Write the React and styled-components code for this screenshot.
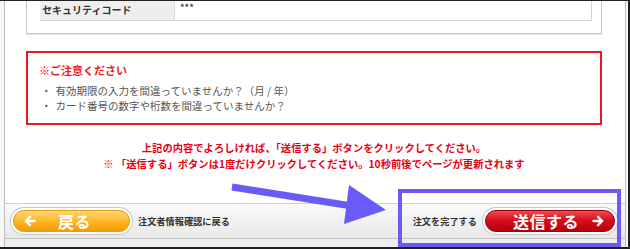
import React from 'react';
import styled, { createGlobalStyle } from 'styled-components';

const GlobalStyle = createGlobalStyle`
  html, body {
    margin: 0;
    padding: 0;
    background: #fff;
  }
  body {
    font-family: "Noto Sans CJK JP", "Noto Sans", sans-serif;
  }
`;

const Frame = styled.div`
  position: relative;
  width: 630px;
  height: 249px;
  box-sizing: border-box;
  border-top: 1px solid #222;
  border-right: 2px solid #222;
  border-bottom: 2px solid #222;
  background: #f7f7f7;
  padding-left: 4px;
  padding-right: 2px;
  overflow: hidden;
`;

const Page = styled.div`
  height: 100%;
  box-sizing: border-box;
  border-left: 1px solid #bdbdbd;
  border-right: 1px solid #bdbdbd;
  background: #fff;
  display: flex;
  flex-direction: column;
`;

const Content = styled.div`
  padding: 0 23px 0 21px;
`;

const PrevBox = styled.div`
  border: 1px solid #c8c8c8;
  border-top: none;
  box-shadow: 0 1px 0 #e4e4e4;
  padding: 0 9px 12px 13px;
`;

const InfoRow = styled.div`
  display: grid;
  grid-template-columns: 135px 1fr;
  height: 19px;
  border-right: 1px solid #d4d4d4;
  border-bottom: 1px solid #d4d4d4;
`;

const Label = styled.div`
  background: #eeeeee;
  border-right: 1px solid #dcdcdc;
  font-size: 10px;
  font-weight: 700;
  color: #333;
  padding-left: 2px;
  line-height: 17px;
`;

const Value = styled.div`
  font-size: 9px;
  font-weight: 700;
  color: #444;
  padding-left: 5px;
  line-height: 14px;
`;

const Notice = styled.div`
  margin-top: 17px;
  height: 74px;
  box-sizing: border-box;
  border: 2px solid #f0141e;
  padding: 9px 12px 0 11px;
`;

const NoticeTitle = styled.div`
  color: #ee1c25;
  font-size: 11px;
  font-weight: 700;
  line-height: 16px;
  margin-bottom: 5px;
`;

const NoticeItem = styled.div`
  color: #555;
  font-size: 10.5px;
  line-height: 15px;
  display: flex;
  gap: 4px;
  padding-left: 2px;
`;

const Messages = styled.div`
  margin-top: 15px;
  text-align: center;
  color: #e60012;
  font-size: 10.3px;
  font-weight: 700;
  line-height: 16px;
`;

const Spacer = styled.div`
  flex: 1;
`;

const Footer = styled.div`
  height: 34px;
  border-top: 1px solid #cfcfcf;
  border-bottom: 1px solid #c4c4c4;
  background: linear-gradient(#fafafa, #e9e9e9);
  display: flex;
  align-items: center;
  justify-content: space-between;
  padding: 0 10px 0 8px;
`;

const FooterBottom = styled.div`
  height: 8px;
  background: #eeeeee;
`;

const Side = styled.div`
  display: flex;
  align-items: center;
  gap: 8px;
`;

const Caption = styled.span`
  font-size: 9.2px;
  font-weight: 700;
  color: #333;
`;

const PillButton = styled.button`
  width: ${(p) => p.$width}px;
  height: 22px;
  border-radius: 11px;
  border: 1px solid ${(p) => (p.$tone === 'red' ? '#9c0010' : '#e89a10')};
  background: ${(p) =>
    p.$tone === 'red'
      ? 'linear-gradient(#ef4a4f 0%, #d8101c 45%, #b4000c 100%)'
      : 'linear-gradient(#ffd878 0%, #ffb628 50%, #f59c00 100%)'};
  box-shadow: 0 0 0 2px #fff, 0 0 0 3px #c8c8c8;
  color: #fff;
  font-family: "Noto Sans CJK JP", sans-serif;
  font-weight: 700;
  display: flex;
  align-items: center;
  padding: ${(p) => (p.$tone === 'red' ? '0 10px 0 14px' : '0 16px 0 10px')};
  cursor: pointer;
  box-sizing: border-box;
`;

const ArrowSvg = styled.svg`
  width: 12px;
  height: 12px;
  flex: none;
`;

const BtnText = styled.span`
  flex: 1;
  text-align: center;
  font-size: ${(p) => p.$size}px;
  line-height: 1;
  letter-spacing: 0.5px;
`;

const Overlay = styled.svg`
  position: absolute;
  left: 0;
  top: 0;
  pointer-events: none;
`;

const PURPLE = '#6a5af6';

const Arrow = ({ dir }) => (
  <ArrowSvg viewBox="0 0 12 12">
    <path
      d={dir === 'left' ? 'M10.5 6H2 M6 1.8L1.8 6L6 10.2' : 'M1.5 6H10 M6 1.8L10.2 6L6 10.2'}
      fill="none"
      stroke="#fff"
      strokeWidth="2.4"
      strokeLinecap="round"
      strokeLinejoin="round"
    />
  </ArrowSvg>
);

export default function App() {
  return (
    <>
      <GlobalStyle />
      <Frame>
        <Page>
          <Content>
            <PrevBox>
              <InfoRow>
                <Label>セキュリティコード</Label>
                <Value>***</Value>
              </InfoRow>
            </PrevBox>
            <Notice>
              <NoticeTitle>※ご注意ください</NoticeTitle>
              <NoticeItem>
                <span>・</span>
                <span>有効期限の入力を間違っていませんか？（月 / 年）</span>
              </NoticeItem>
              <NoticeItem>
                <span>・</span>
                <span>カード番号の数字や桁数を間違っていませんか？</span>
              </NoticeItem>
            </Notice>
            <Messages>
              <div>上記の内容でよろしければ、「送信する」ボタンをクリックしてください。</div>
              <div>※ 「送信する」ボタンは1度だけクリックしてください。10秒前後でページが更新されます</div>
            </Messages>
          </Content>
          <Spacer />
          <Footer>
            <Side>
              <PillButton $width={117} $tone="orange">
                <Arrow dir="left" />
                <BtnText $size={16}>戻る</BtnText>
              </PillButton>
              <Caption>注文者情報確認に戻る</Caption>
            </Side>
            <Side>
              <Caption>注文を完了する</Caption>
              <PillButton $width={130} $tone="red">
                <BtnText $size={16}>送信する</BtnText>
                <Arrow dir="right" />
              </PillButton>
            </Side>
          </Footer>
          <FooterBottom />
        </Page>
        <Overlay width="630" height="249" viewBox="0 0 630 249">
          <rect x="400" y="190" width="219" height="54" fill="none" stroke={PURPLE} strokeWidth="4" />
          <line x1="232" y1="186" x2="352" y2="205" stroke={PURPLE} strokeWidth="7" />
          <polygon points="349,184 386,209 344,223" fill={PURPLE} />
        </Overlay>
      </Frame>
    </>
  );
}
